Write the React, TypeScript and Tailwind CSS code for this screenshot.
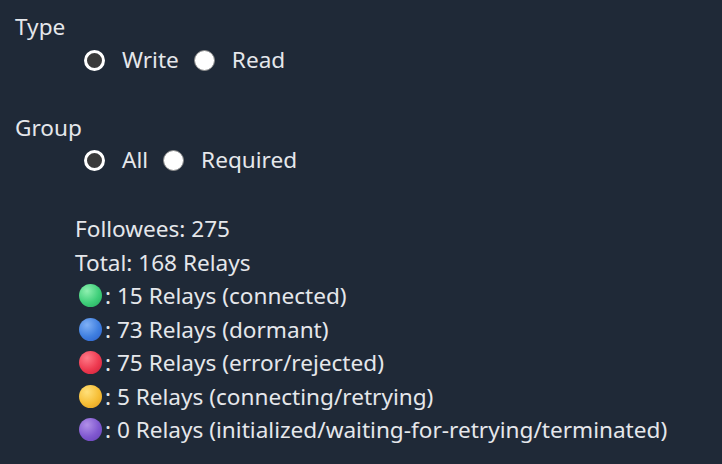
import React from "react";

function Radio({ checked, label }: { checked: boolean; label: string }) {
  return (
    <div className="flex items-center">
      {checked ? (
        <span className="box-border w-[21px] h-[21px] rounded-full border-[3px] border-white bg-[#3a3a3a]" />
      ) : (
        <span className="box-border w-[21px] h-[21px] rounded-full border border-[#8a8a8a] bg-white" />
      )}
      <span className="ml-[17px] mr-[15px]">{label}</span>
    </div>
  );
}

const dots = [
  { bg: "bg-[radial-gradient(circle_at_35%_30%,#8ff0b0_0%,#3fcf7a_55%,#22a85c_100%)]", text: ": 15 Relays (connected)" },
  { bg: "bg-[radial-gradient(circle_at_35%_30%,#7fb0f5_0%,#3f7fe0_55%,#2a5cc8_100%)]", text: ": 73 Relays (dormant)" },
  { bg: "bg-[radial-gradient(circle_at_35%_30%,#ff7a88_0%,#ee3a50_55%,#c81e36_100%)]", text: ": 75 Relays (error/rejected)" },
  { bg: "bg-[radial-gradient(circle_at_35%_30%,#ffe07a_0%,#f6be36_55%,#e09a1c_100%)]", text: ": 5 Relays (connecting/retrying)" },
  { bg: "bg-[radial-gradient(circle_at_35%_30%,#b190e8_0%,#8058d0_55%,#6440b4_100%)]", text: ": 0 Relays (initialized/waiting-for-retrying/terminated)" },
];

export default function App() {
  return (
    <div
      className="w-[722px] h-[464px] bg-[#1f2937] text-[#e5e7eb] text-[22.6px] overflow-hidden"
      style={{ fontFamily: '"Noto Sans", "Segoe UI", sans-serif' }}
    >
      <div className="pl-[15px] pt-[12px]">
        <div className="leading-[30px]">Type</div>
        <div className="pl-[69px] mt-[3px] h-[30px] flex items-center">
          <Radio checked label="Write" />
          <Radio checked={false} label="Read" />
        </div>
        <div className="leading-[30px] mt-[38px]">Group</div>
        <div className="pl-[69px] mt-[2px] h-[30px] flex items-center">
          <Radio checked label="All" />
          <Radio checked={false} label="Required" />
        </div>
        <div className="pl-[60px] mt-[37px] leading-[33.5px]">
          <div>Followees: 275</div>
          <div>Total: 168 Relays</div>
          {dots.map((d, i) => (
            <div key={i} className="flex items-center h-[33.5px]">
              <span className={`ml-[4px] w-[23px] h-[23px] rounded-full ${d.bg}`} />
              <span className="ml-[3px]">{d.text}</span>
            </div>
          ))}
        </div>
      </div>
    </div>
  );
}
